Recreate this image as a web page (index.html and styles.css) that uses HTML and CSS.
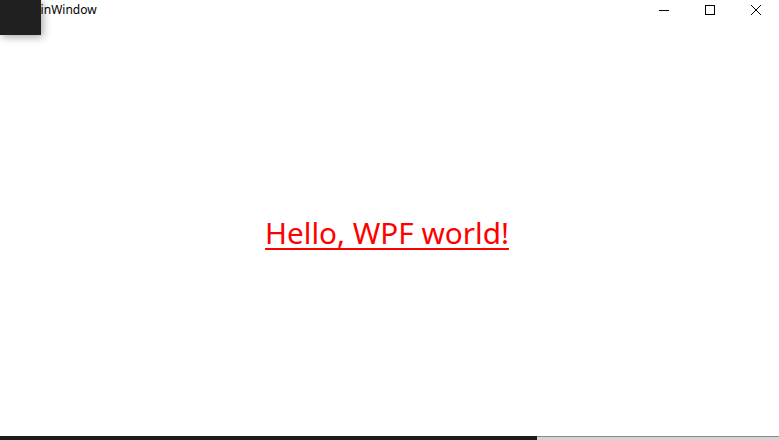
FILE: index.html
```html
<!DOCTYPE html>
<html>
<head>
<meta charset="utf-8">
<link rel="stylesheet" href="styles.css">
</head>
<body>
<div class="window">
  <div class="titlebar">
    <div class="title">MainWindow</div>
    <div class="caption">
      <div class="cbtn"><svg width="12" height="12" viewBox="0 0 12 12"><path d="M1 6.5h10" stroke="#000" stroke-width="1"/></svg></div>
      <div class="cbtn"><svg width="12" height="12" viewBox="0 0 12 12"><rect x="1.5" y="1.5" width="9" height="9" fill="none" stroke="#000" stroke-width="1"/></svg></div>
      <div class="cbtn"><svg width="12" height="12" viewBox="0 0 12 12"><path d="M1 1L11 11M11 1L1 11" stroke="#000" stroke-width="1"/></svg></div>
    </div>
  </div>
  <div class="content">
    <span class="hello">Hello, WPF world!</span>
  </div>
  <div class="taskbar">
    <div class="tb-dark"></div>
    <div class="tb-light"></div>
  </div>
  <div class="overlay"></div>
</div>
</body>
</html>
```
FILE: styles.css
```css
html, body {
  margin: 0;
  padding: 0;
  background: #fff;
}
.window {
  position: relative;
  width: 779px;
  height: 440px;
  display: flex;
  flex-direction: column;
  overflow: hidden;
  font-family: "Noto Sans", "Open Sans", sans-serif;
}
.titlebar {
  height: 30px;
  display: flex;
  align-items: flex-start;
  justify-content: space-between;
}
.title {
  font-size: 12px;
  color: #000;
  padding-left: 23px;
  line-height: 20px;
}
.caption {
  display: flex;
}
.cbtn {
  width: 46px;
  height: 20px;
  display: flex;
  align-items: center;
  justify-content: center;
}
.cbtn svg { display: block; }
.content {
  flex: 1;
  display: flex;
  align-items: center;
  justify-content: center;
  padding-bottom: 2px;
  padding-right: 5px;
}
.hello {
  color: #ff0000;
  font-size: 29.7px;
  text-decoration: underline;
  text-decoration-thickness: 2px;
  text-underline-offset: 4px;
}
.taskbar {
  height: 4px;
  display: flex;
}
.tb-dark {
  width: 537px;
  background: #1c1c1c;
}
.tb-light {
  flex: 1;
  background: #d4d4d4;
  border-top: 1px solid #8a8a8a;
}
.overlay {
  position: absolute;
  left: 0;
  top: 0;
  width: 41px;
  height: 35px;
  background: #202020;
  box-shadow: 2px 2px 8px rgba(0,0,0,0.35);
}
```
